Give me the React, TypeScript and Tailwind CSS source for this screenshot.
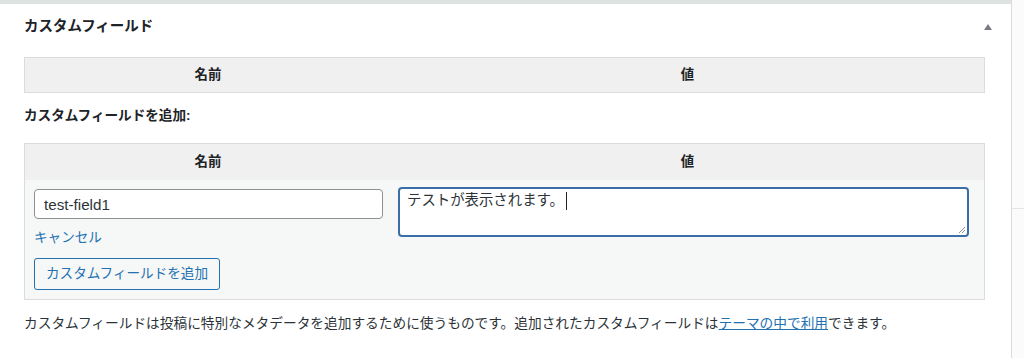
const font = { fontFamily: '"Liberation Sans", "Noto Sans CJK JP", sans-serif' }

function HeaderRow() {
  return (
    <div className="grid grid-cols-[366px_1fr] h-full items-center text-[13.4px] font-bold text-[#1d2327]">
      <div className="text-center">名前</div>
      <div className="text-center">値</div>
    </div>
  )
}

export default function App() {
  return (
    <div className="flex w-[1024px] h-[358px] bg-white overflow-hidden" style={font}>
      {/* メインのメタボックス */}
      <div className="w-[1012px] flex flex-col border-r border-[#dcdcde]">
        <div className="h-[4px] bg-[#dde3e1]" />

        <div className="h-[46px] flex items-center justify-between pl-6 pr-[19px]">
          <h2 className="text-[14.5px] font-bold text-[#1d2327]">カスタムフィールド</h2>
          <svg width="8" height="6" viewBox="0 0 8 6">
            <polygon points="4,0 8,6 0,6" fill="#787c82" />
          </svg>
        </div>

        <div className="pl-6 pr-[26px] pt-[7px]">
          <div className="h-[36px] bg-[#f0f0f1] border border-[#dcdcde]">
            <HeaderRow />
          </div>

          <p className="mt-[13px] h-[20px] leading-[20px] text-[13.6px] font-bold text-[#1d2327]">
            カスタムフィールドを追加:
          </p>

          <div className="mt-[17px] border border-[#dcdcde] bg-[#f6f7f7]">
            <div className="h-[36px] bg-[#f0f0f1]">
              <HeaderRow />
            </div>
            <div className="grid grid-cols-[366px_1fr]">
              <div className="pl-[9px] pr-[8px] pt-[9px] pb-[9px] flex flex-col items-start">
                <input
                  readOnly
                  value="test-field1"
                  className="w-full h-[30px] px-[9px] rounded-[4px] border border-[#8c8f94] bg-white text-[15.2px] text-[#2c3338] outline-none"
                  style={font}
                />
                <a className="mt-[9px] h-[20px] leading-[20px] text-[13.6px] text-[#2271b1]">キャンセル</a>
                <button
                  className="mt-[10px] h-[32px] px-[11px] rounded-[3px] border border-[#2271b1] bg-[#f6f7f7] text-[13.6px] text-[#2271b1]"
                  style={font}
                >
                  カスタムフィールドを追加
                </button>
              </div>
              <div className="pl-[7px] pr-[15px] pt-[7px]">
                <div className="relative h-[50px] rounded-[4px] border-2 border-[#3a6ea8] bg-white px-[7px] pt-[1px] text-[14.4px] leading-[20px] text-[#2c3338]">
                  テストが表示されます。<span className="inline-block w-px h-[18px] bg-[#1d2327] align-middle ml-[2px]" />
                  <svg className="absolute right-[1px] bottom-[1px]" width="8" height="8" viewBox="0 0 8 8">
                    <path d="M7 1L1 7M7 4L4 7" stroke="#8c8f94" strokeWidth="1" />
                  </svg>
                </div>
              </div>
            </div>
          </div>

          <p className="mt-[14px] h-[20px] leading-[20px] text-[13.7px] text-[#2c3338] whitespace-nowrap">
            カスタムフィールドは投稿に特別なメタデータを追加するために使うものです。追加されたカスタムフィールドは
            <a className="text-[#2271b1] underline">テーマの中で利用</a>
            できます。
          </p>
        </div>
      </div>

      {/* 右側のサイドバー */}
      <div className="flex-1 flex flex-col bg-[#fbfbfb]">
        <div className="h-[208px]" />
        <div className="border-t border-[#e5e5e5]" />
      </div>
    </div>
  )
}
